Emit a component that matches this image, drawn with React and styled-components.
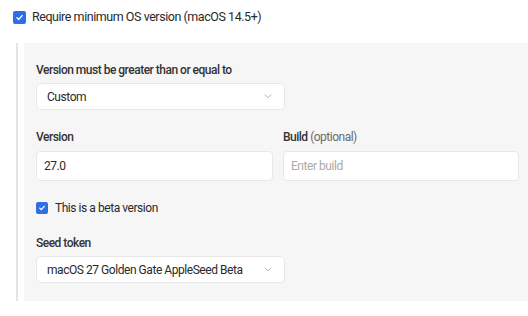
import React from 'react'
import styled, { createGlobalStyle } from 'styled-components'

const GlobalStyle = createGlobalStyle`
  html, body {
    margin: 0;
    padding: 0;
    background: #fff;
  }
  body {
    font-family: Roboto, "Noto Sans", sans-serif;
    color: #2a2a2a;
    -webkit-font-smoothing: antialiased;
  }
`

const Check = ({ size = 12 }) => (
  <CheckBox $size={size}>
    <svg width={size - 4} height={size - 4} viewBox="0 0 10 10" fill="none">
      <path d="M2.2 5.2 L4.2 7.1 L7.9 2.9" stroke="#fff" strokeWidth="1.6" strokeLinecap="round" strokeLinejoin="round" />
    </svg>
  </CheckBox>
)

const Chevron = () => (
  <svg width="8" height="5" viewBox="0 0 8 5" fill="none">
    <path d="M1.2 1 L4 3.8 L6.8 1" stroke="#adadad" strokeWidth="1" strokeLinecap="round" strokeLinejoin="round" />
  </svg>
)

const App = () => (
  <Page>
    <GlobalStyle />
    <CheckRow>
      <Check size={13} />
      <HeaderText>Require minimum OS version (macOS 14.5+)</HeaderText>
    </CheckRow>
    <Indent>
      <Panel>
        <Field>
          <Label>Version must be greater than or equal to</Label>
          <Select>
            <span>Custom</span>
            <Chevron />
          </Select>
        </Field>
        <TwoCols>
          <Field>
            <Label>Version</Label>
            <Input>27.0</Input>
          </Field>
          <Field>
            <Label>Build <Optional>(optional)</Optional></Label>
            <Input placeholder>Enter build</Input>
          </Field>
        </TwoCols>
        <CheckRow $inner>
          <Check size={12} />
          <CheckText>This is a beta version</CheckText>
        </CheckRow>
        <Field>
          <Label>Seed token</Label>
          <Select>
            <span>macOS 27 Golden Gate AppleSeed Beta</span>
            <Chevron />
          </Select>
        </Field>
      </Panel>
    </Indent>
  </Page>
)

export default App

const Page = styled.div`
  padding: 9px 0 0 13px;
  width: 528px;
  box-sizing: border-box;
  overflow: hidden;
`

const CheckRow = styled.div`
  display: flex;
  align-items: center;
  gap: ${(p) => (p.$inner ? '7px' : '6px')};
  height: 16px;
`

const CheckBox = styled.span`
  width: ${(p) => p.$size}px;
  height: ${(p) => p.$size}px;
  border-radius: 2px;
  background: #2f6fe6;
  display: inline-flex;
  align-items: center;
  justify-content: center;
  flex-shrink: 0;
`

const Text = styled.span`
  font-size: 12px;
  line-height: 16px;
  letter-spacing: -0.45px;
  color: #2a2a2a;
  white-space: nowrap;
`

const HeaderText = styled(Text)`
  font-size: 12.5px;
  letter-spacing: -0.45px;
`

const CheckText = styled(Text)``

const Indent = styled.div`
  margin-top: 18px;
  margin-left: 3px;
  border-left: 2px solid #e4e4e4;
  padding-left: 6px;
`

const Panel = styled.div`
  background: #f6f6f6;
  padding: 19px 9px 18px 12px;
  display: flex;
  flex-direction: column;
  gap: 19px;
  width: 540px;
`

const Field = styled.div`
  display: flex;
  flex-direction: column;
  gap: 5px;
  width: 249px;
`

const TwoCols = styled.div`
  display: grid;
  grid-template-columns: 237px 236px;
  column-gap: 10px;

  & > div {
    width: auto;
    gap: 6px;
  }
`

const Label = styled.div`
  font-size: 12px;
  line-height: 16px;
  letter-spacing: -0.5px;
  font-weight: 500;
  color: #333;
  white-space: nowrap;
`

const Optional = styled.span`
  font-weight: 400;
  color: #6b6b6b;
`

const Select = styled.div`
  height: 27px;
  box-sizing: border-box;
  background: #fff;
  border: 1px solid #e8e8e8;
  border-radius: 5px;
  display: flex;
  align-items: center;
  justify-content: space-between;
  padding: 0 12px 0 10px;
  font-size: 12px;
  letter-spacing: -0.45px;
  white-space: nowrap;
  color: #2a2a2a;
`

const Input = styled.div`
  height: 30px;
  box-sizing: border-box;
  background: #fff;
  border: 1px solid #e8e8e8;
  border-radius: 4px;
  display: flex;
  align-items: center;
  padding: 0 7px;
  font-size: 12px;
  letter-spacing: -0.45px;
  color: ${(p) => (p.placeholder ? '#a9a9a9' : '#2a2a2a')};
`
